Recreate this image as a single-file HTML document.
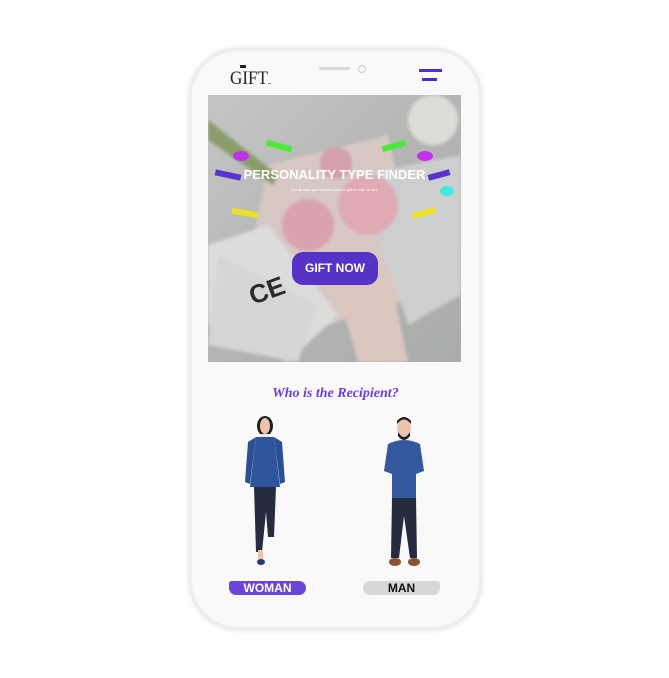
<!DOCTYPE html>
<html><head><meta charset="utf-8"><style>
*{margin:0;padding:0;box-sizing:border-box}
body{width:669px;height:678px;background:#fff;position:relative;overflow:hidden;font-family:"Liberation Sans",sans-serif}
.phone{position:absolute;left:190px;top:49px;width:291px;height:580px;border-radius:48px;background:#f9f9f9;box-shadow:0 0 6px rgba(0,0,0,.18),inset 0 0 0 2px #eee}
.abs{position:absolute}
.hero{position:absolute;left:208px;top:95px;width:253px;height:267px;overflow:hidden;background:linear-gradient(135deg,#c4c6c4 0%,#b4b6b4 50%,#a9aca9 100%)}
</style></head><body>
<div class="phone"></div>
<div class="abs" style="left:230px;top:68px;font-family:'Liberation Serif',serif;font-size:19px;color:#222;transform:scaleX(0.9);transform-origin:left">GIFT<span style="font-size:8px">..</span></div>
<div class="abs" style="left:240px;top:65px;width:6px;height:3px;background:#222"></div>
<div class="abs" style="left:319px;top:67px;width:31px;height:3px;border-radius:2px;background:#d9d9d9"></div>
<div class="abs" style="left:358px;top:65px;width:8px;height:8px;border-radius:50%;border:1px solid #ccc"></div>
<div class="abs" style="left:419px;top:69px;width:23px;height:3px;background:#4a2fc9"></div>
<div class="abs" style="left:422px;top:78px;width:15px;height:3px;background:#4a2fc9"></div>
<div class="hero">
<svg width="253" height="267" style="position:absolute;left:0;top:0;filter:blur(1.5px)">
<polygon points="60,70 180,40 215,200 120,230 40,170" fill="#d8c8c4"/>
<polygon points="0,150 60,130 130,220 80,267 0,230" fill="#dcdcda"/>
<polygon points="10,160 110,210 90,267 0,250" fill="#d6d6d4"/>
<polygon points="150,80 253,60 253,200 200,230" fill="#cdcfce"/>
<circle cx="100" cy="130" r="26" fill="#d9a2ae"/>
<circle cx="160" cy="110" r="30" fill="#e0aab4"/>
<circle cx="128" cy="68" r="16" fill="#d3a0ab"/>
<polygon points="120,160 180,170 200,267 150,267" fill="#dcc6c0"/>
<polygon points="0,25 70,80 65,90 0,45" fill="#8a9c6a"/>
<circle cx="225" cy="25" r="25" fill="#dcdcd8"/>
</svg>
<svg width="253" height="267" style="position:absolute;left:0;top:0"><text x="45" y="210" font-size="26" font-weight="bold" fill="#2a2a2a" transform="rotate(-20 45 210)">CE</text></svg>
</div>
<div class="abs" style="left:233px;top:151px;width:16px;height:10px;border-radius:50%;background:#c531e8"></div>
<div class="abs" style="left:417px;top:151px;width:16px;height:10px;border-radius:50%;background:#c531e8"></div>
<div class="abs" style="left:440px;top:186px;width:14px;height:10px;border-radius:50%;background:#41e9e3"></div>
<div class="abs" style="left:266px;top:143px;width:26px;height:6px;background:#4cea36;transform:rotate(15deg)"></div>
<div class="abs" style="left:382px;top:143px;width:24px;height:6px;background:#4cea36;transform:rotate(-15deg)"></div>
<div class="abs" style="left:215px;top:172px;width:26px;height:6px;background:#5a33cd;transform:rotate(12deg)"></div>
<div class="abs" style="left:428px;top:172px;width:22px;height:6px;background:#5a33cd;transform:rotate(-15deg)"></div>
<div class="abs" style="left:232px;top:210px;width:26px;height:6px;background:#ece02a;transform:rotate(10deg)"></div>
<div class="abs" style="left:412px;top:210px;width:24px;height:6px;background:#ece02a;transform:rotate(-15deg)"></div>
<div class="abs" style="left:208px;top:167px;width:253px;text-align:center;color:#fff;font-weight:bold;font-size:13px">PERSONALITY TYPE FINDER</div>
<div class="abs" style="left:208px;top:187px;width:253px;text-align:center;color:#fff;font-size:4px">Let us help you find the perfect gift for him or her.</div>
<div class="abs" style="left:292px;top:252px;width:86px;height:33px;border-radius:11px;background:#5533c6;color:#fff;font-weight:bold;font-size:12px;text-align:center;line-height:33px">GIFT NOW</div>
<div class="abs" style="left:190px;top:386px;width:291px;text-align:center;color:#6a3fd8;font-family:'Liberation Serif',serif;font-style:italic;font-weight:bold;font-size:14px">Who is the Recipient?</div>
<svg class="abs" style="left:240px;top:412px" width="50" height="156">
<ellipse cx="25" cy="14" rx="8" ry="10" fill="#1e1e1e"/>
<ellipse cx="25" cy="14" rx="5" ry="8" fill="#ecc3ad"/>
<rect x="20" y="22" width="10" height="24" fill="#e8e8e8"/>
<path d="M16 25 L34 25 L40 75 L10 75 Z" fill="#2f569c"/>
<path d="M16 25 L8 30 L5 70 L10 72 Z M34 25 L42 30 L45 70 L40 72 Z" fill="#2a4f93"/>
<path d="M14 75 L36 75 L34 125 L28 125 L26 100 L22 140 L16 140 Z" fill="#262b3f"/>
<rect x="18" y="138" width="5" height="10" fill="#ecc3ad"/>
<ellipse cx="21" cy="150" rx="4" ry="3" fill="#1e3d78"/>
</svg>
<svg class="abs" style="left:380px;top:416px" width="50" height="152">
<ellipse cx="24" cy="12" rx="7" ry="9" fill="#ecc3ad"/>
<path d="M17 8 Q24 -1 31 8 L31 5 Q24 -3 17 5Z" fill="#1e1e1e"/>
<path d="M18 16 Q24 26 30 16 L30 20 Q24 28 18 20Z" fill="#1e1e1e"/>
<path d="M8 28 Q24 20 40 28 L44 55 L36 58 L36 82 L12 82 L12 58 L4 55 Z" fill="#33589c"/>
<path d="M12 82 L36 82 L37 142 L30 142 L24 100 L19 142 L11 142 Z" fill="#262b3f"/>
<ellipse cx="15" cy="146" rx="6" ry="4" fill="#8a5236"/>
<ellipse cx="34" cy="146" rx="6" ry="4" fill="#8a5236"/>
</svg>
<div class="abs" style="left:229px;top:581px;width:77px;height:14px;border-radius:3px 8px 8px 8px;background:#6a45d6;color:#fff;font-weight:bold;font-size:12px;text-align:center;line-height:14px">WOMAN</div>
<div class="abs" style="left:363px;top:581px;width:77px;height:14px;border-radius:8px 3px 8px 8px;background:#d8d8d8;color:#111;font-weight:bold;font-size:12px;text-align:center;line-height:14px">MAN</div>
</body></html>
